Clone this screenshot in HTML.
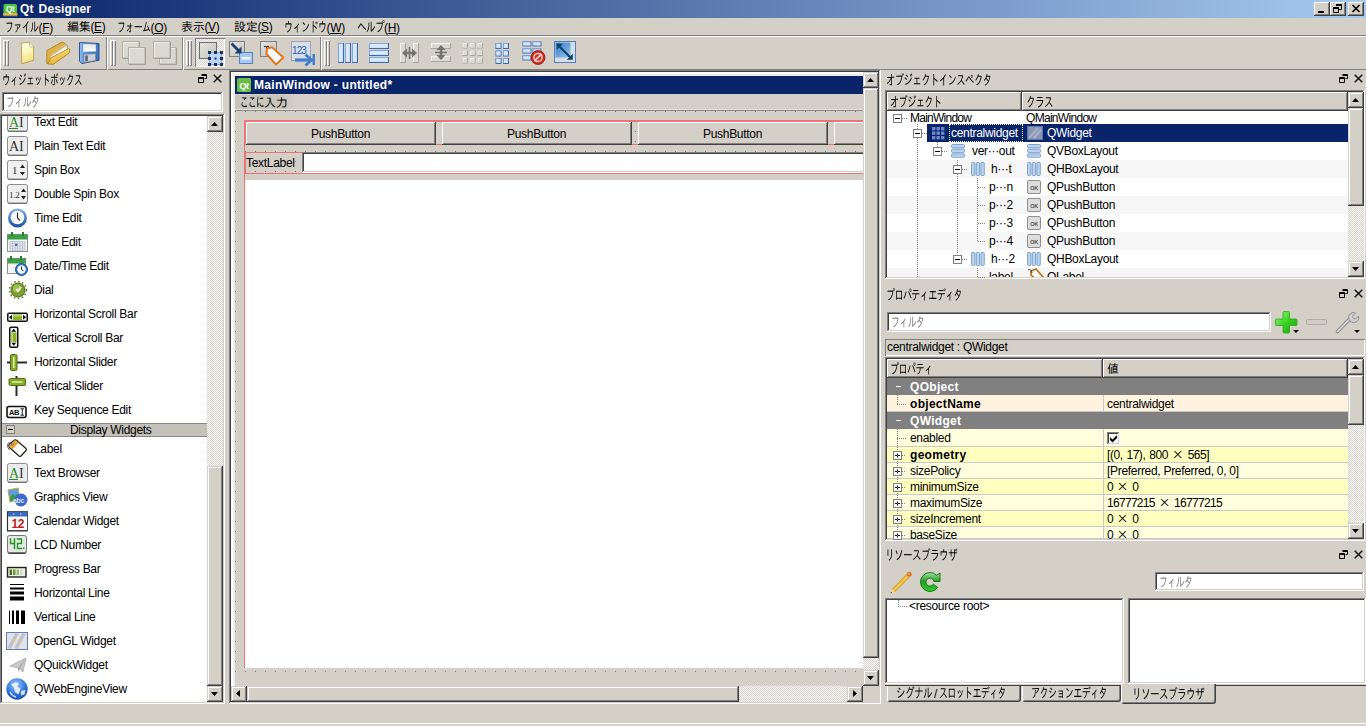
<!DOCTYPE html>
<html lang="ja">
<head>
<meta charset="utf-8">
<title>Qt Designer</title>
<style>
html,body{margin:0;padding:0;}
body{width:1366px;height:726px;overflow:hidden;position:relative;background:#d4d0c8;
 font-family:"Liberation Sans","IPAGothic","Noto Sans CJK JP",sans-serif;font-size:12px;color:#000;letter-spacing:-0.3px;}
div{position:absolute;box-sizing:border-box;}
svg{position:absolute;overflow:visible;}
.t{white-space:nowrap;}
.b{font-weight:bold;letter-spacing:0.3px;}
.k{display:inline-block;font-size:14px;letter-spacing:-1px;white-space:nowrap;line-height:14px;}
.k>i{display:inline-block;font-style:normal;transform-origin:0 50%;margin-left:-0.4px;}
.raised{box-shadow:inset -1px -1px #404040,inset 1px 1px #d4d0c8,inset -2px -2px #808080,inset 2px 2px #fff;background:#d4d0c8;}
.btn{box-shadow:inset -1px -1px #404040,inset 1px 1px #fff,inset -2px -2px #808080,inset 2px 2px #d4d0c8;background:#d4d0c8;}
.sunken{box-shadow:inset -1px -1px #fff,inset 1px 1px #808080,inset -2px -2px #d4d0c8,inset 2px 2px #404040;}
.white{background:#fff;}
.dither{background-color:#fff;background-image:conic-gradient(#d4d0c8 25%,#fff 0 50%,#d4d0c8 0 75%,#fff 0);background-size:2px 2px;}
.gray{color:#808080;}
.x{font-family:"IPAGothic","Noto Sans CJK JP",sans-serif;letter-spacing:0;line-height:0;}
.num{letter-spacing:-0.7px;word-spacing:1px;}
.num2{letter-spacing:-0.45px;word-spacing:1px;}
.hl{background:#fff;}
.sh{background:#808080;}
.dk{background:#404040;}
</style>
</head>
<body>
<div class="" style="left:0px;top:0px;width:1366px;height:18px;background:linear-gradient(90deg,#0a246a 0%,#a6caf0 100%);"></div>
<svg style="left:3px;top:3px" width="15" height="14" viewBox="0 0 15 14"><rect x="0.5" y="1" width="13.500" height="9.500" rx="1.800" fill="#4fc247"/><rect x="0" y="10" width="14.500" height="2.400" fill="#f2b21c"/><rect x="0.5" y="12.400" width="13.500" height="0.800" fill="#aab4c8"/><text x="7.200" y="8.800" font-family="Liberation Sans,sans-serif" font-size="8.500" font-weight="bold" fill="#e8ffe8" text-anchor="middle" letter-spacing="-0.300">Qt</text></svg>
<div class="t b" style="left:20px;top:2px;height:14px;line-height:14px;color:#fff;letter-spacing:0.15px;word-spacing:1.5px;">Qt Designer</div>
<div class="btn" style="left:1314px;top:2px;width:16px;height:14px;"></div>
<div class="btn" style="left:1330px;top:2px;width:16px;height:14px;"></div>
<div class="btn" style="left:1348px;top:2px;width:16px;height:14px;"></div>
<svg style="left:1318px;top:11px" width="6" height="2" viewBox="0 0 6 2"><rect width="6" height="2" fill="#000"/></svg>
<svg style="left:1333px;top:4px" width="9" height="10" viewBox="0 0 9 10"><path d="M3.500 1.500h5v4h-2.500M0.500 4.500h5v4h-5z" fill="none" stroke="#000"/><path d="M3 0h6v2h-6zM0 3h6v2h-6z" fill="#000"/></svg>
<svg style="left:1352px;top:5px" width="8" height="7" viewBox="0 0 8 7"><path d="M0.5 0l7 7M7.5 0l-7 7" stroke="#000" stroke-width="1.6"/></svg>
<div class="t " style="left:5px;top:20px;height:14px;line-height:14px;"><span class="k" style="width:33.5px"><i style="transform:scaleX(0.644)">ファイル</i></span>(<u>F</u>)</div>
<div class="t " style="left:67px;top:20px;height:14px;line-height:14px;">編集(<u>E</u>)</div>
<div class="t " style="left:117px;top:20px;height:14px;line-height:14px;"><span class="k" style="width:33.5px"><i style="transform:scaleX(0.644)">フォーム</i></span>(<u>O</u>)</div>
<div class="t " style="left:181px;top:20px;height:14px;line-height:14px;">表示(<u>V</u>)</div>
<div class="t " style="left:234px;top:20px;height:14px;line-height:14px;">設定(<u>S</u>)</div>
<div class="t " style="left:284px;top:20px;height:14px;line-height:14px;"><span class="k" style="width:42.5px"><i style="transform:scaleX(0.654)">ウィンドウ</i></span>(<u>W</u>)</div>
<div class="t " style="left:357px;top:20px;height:14px;line-height:14px;"><span class="k" style="width:27px"><i style="transform:scaleX(0.692)">ヘルプ</i></span>(<u>H</u>)</div>
<div class="sh" style="left:0px;top:35px;width:1366px;height:1px;"></div>
<div class="hl" style="left:0px;top:36px;width:1366px;height:1px;"></div>
<div class="" style="left:0px;top:36px;width:107px;height:34px;box-shadow:inset 1px 1px #fff,inset -1px -1px #808080;"></div>
<div class="" style="left:107px;top:36px;width:76px;height:34px;box-shadow:inset 1px 1px #fff,inset -1px -1px #808080;"></div>
<div class="" style="left:183px;top:36px;width:138px;height:34px;box-shadow:inset 1px 1px #fff,inset -1px -1px #808080;"></div>
<div class="" style="left:321px;top:36px;width:1045px;height:34px;box-shadow:inset 1px 1px #fff,inset 0 -1px #808080;"></div>
<div class="" style="left:3px;top:40px;width:3px;height:26px;box-shadow:inset 1px 1px #fff,inset -1px -1px #808080;"></div>
<div class="" style="left:6px;top:40px;width:3px;height:26px;box-shadow:inset 1px 1px #fff,inset -1px -1px #808080;"></div>
<div class="" style="left:110px;top:40px;width:3px;height:26px;box-shadow:inset 1px 1px #fff,inset -1px -1px #808080;"></div>
<div class="" style="left:113px;top:40px;width:3px;height:26px;box-shadow:inset 1px 1px #fff,inset -1px -1px #808080;"></div>
<div class="" style="left:186px;top:40px;width:3px;height:26px;box-shadow:inset 1px 1px #fff,inset -1px -1px #808080;"></div>
<div class="" style="left:189px;top:40px;width:3px;height:26px;box-shadow:inset 1px 1px #fff,inset -1px -1px #808080;"></div>
<div class="" style="left:324px;top:40px;width:3px;height:26px;box-shadow:inset 1px 1px #fff,inset -1px -1px #808080;"></div>
<div class="" style="left:327px;top:40px;width:3px;height:26px;box-shadow:inset 1px 1px #fff,inset -1px -1px #808080;"></div>
<svg style="left:15px;top:41px" width="24" height="24" viewBox="0 0 24 24"><defs><linearGradient id="gn" x1="0" y1="0" x2="0.3" y2="1"><stop offset="0" stop-color="#fffff4"/><stop offset="0.5" stop-color="#fdf7c0"/><stop offset="1" stop-color="#f1e27c"/></linearGradient></defs><path d="M6.500 2l8-0.700 4.200 4.400v13.600l-12 3.400z" fill="url(#gn)" stroke="#c2a24c" stroke-width="1"/><path d="M14.500 1.500q-0.500 3.500 0.500 4.500 1.500 0.800 3.700-0.200" fill="#f4f0d8" stroke="#b8b090" stroke-width="0.7"/></svg>
<svg style="left:46px;top:41px" width="25" height="24" viewBox="0 0 25 24"><defs><linearGradient id="go" x1="0" y1="0" x2="0.4" y2="1"><stop offset="0" stop-color="#fae58c"/><stop offset="1" stop-color="#e2b437"/></linearGradient></defs><path d="M0.800 9.500L15 1.500q2-1 3.500 0.500l3 3v4.500L5 18.500v3.500l-4.200 0.500z" fill="#deb244" stroke="#a87a18" stroke-width="0.8"/><path d="M4.500 15.500L20.500 4.500l1.500 5L6 20.500z" fill="#fff" stroke="#b9b4a6" stroke-width="0.6"/><path d="M5 13.500L19.500 3.500" stroke="#cfcabc" stroke-width="0.8"/><path d="M5.500 16.500L22.500 7.500q1.800 0.200 1.300 2.500l-0.600 2L7 23.500l-5.500-0.700z" fill="url(#go)" stroke="#a87a18" stroke-width="0.8"/></svg>
<svg style="left:77px;top:41px" width="24" height="24" viewBox="0 0 24 24"><defs><linearGradient id="gs" x1="0" y1="0" x2="1" y2="0"><stop offset="0" stop-color="#9cc4f2"/><stop offset="0.25" stop-color="#4f8fdc"/><stop offset="1" stop-color="#3a72bc"/></linearGradient><linearGradient id="gs2" x1="0" y1="0" x2="0" y2="1"><stop offset="0" stop-color="#dfe3e8"/><stop offset="1" stop-color="#ffffff"/></linearGradient></defs><path d="M2.500 1.500l19.500 1v16.800L5 22.500l-2.500-2.300z" fill="url(#gs)" stroke="#2c5590" stroke-width="1"/><path d="M6 2.700l13 0.500v7.300L6 11z" fill="url(#gs2)" stroke="#8fa6c4" stroke-width="0.5"/><path d="M7 13.200l11.500-0.500v6.800L7 21.500z" fill="#ccd0d6" stroke="#7d8792" stroke-width="0.6"/><path d="M8.300 14.500l2.500-0.100v5.600l-2.500 0.400z" fill="#59626d"/></svg>
<svg style="left:122px;top:41px" width="24" height="24" viewBox="0 0 24 24"><g transform="translate(0,0)"><rect x="0.5" y="0.5" width="16.500" height="16.500" fill="#dcd9d2" stroke="#b2aea4"/><path d="M1.500 16v-14.500h14.500" stroke="#eceae5" fill="none"/><path d="M1 17.500h16.500v-16.500" stroke="#a29e94" fill="none"/></g><g transform="translate(6,6)"><rect x="0.5" y="0.5" width="16.500" height="16.500" fill="#dcd9d2" stroke="#b2aea4"/><path d="M1.500 16v-14.500h14.500" stroke="#eceae5" fill="none"/><path d="M1 17.500h16.500v-16.500" stroke="#a29e94" fill="none"/></g></svg>
<svg style="left:153px;top:41px" width="24" height="24" viewBox="0 0 24 24"><g transform="translate(6,6)"><rect x="0.5" y="0.5" width="16.500" height="16.500" fill="#dcd9d2" stroke="#b2aea4"/><path d="M1.500 16v-14.500h14.500" stroke="#eceae5" fill="none"/><path d="M1 17.500h16.500v-16.500" stroke="#a29e94" fill="none"/></g><g transform="translate(0,0)"><rect x="0.5" y="0.5" width="16.500" height="16.500" fill="#dcd9d2" stroke="#b2aea4"/><path d="M1.500 16v-14.500h14.500" stroke="#eceae5" fill="none"/><path d="M1 17.500h16.500v-16.500" stroke="#a29e94" fill="none"/></g></svg>
<div class="dither" style="left:195px;top:38px;width:30px;height:29px;box-shadow:inset 1px 1px #808080,inset -1px -1px #fff;"></div>
<svg style="left:199px;top:42px" width="24" height="24" viewBox="0 0 24 24"><defs><linearGradient id="gq" x1="0" y1="0" x2="1" y2="1"><stop offset="0" stop-color="#e6e4de"/><stop offset="1" stop-color="#c4c2bc"/></linearGradient></defs><rect x="0.5" y="0.5" width="17" height="16" fill="url(#gq)" stroke="#6e6e6e" stroke-width="1"/><rect x="10.5" y="10.5" width="12" height="12" fill="#bcd6fa" stroke="#7fa4dc"/><g fill="#1f2f5f"><rect x="9" y="9" width="3" height="3"/><rect x="15" y="9" width="3" height="3"/><rect x="21" y="9" width="3" height="3"/><rect x="9" y="15" width="3" height="3"/><rect x="21" y="15" width="3" height="3"/><rect x="9" y="21" width="3" height="3"/><rect x="15" y="21" width="3" height="3"/><rect x="21" y="21" width="3" height="3"/><rect x="15.500" y="15.500" width="2" height="2"/></g></svg>
<svg style="left:229px;top:41px" width="24" height="24" viewBox="0 0 24 24"><defs><linearGradient id="gq" x1="0" y1="0" x2="1" y2="1"><stop offset="0" stop-color="#e6e4de"/><stop offset="1" stop-color="#c4c2bc"/></linearGradient></defs><rect x="0.5" y="0.5" width="15" height="15" fill="url(#gq)" stroke="#808080"/><rect x="10.5" y="11.5" width="13" height="11" fill="#a9c8f2" stroke="#5583c4"/><rect x="12.500" y="16" width="9" height="2.500" fill="#eef4fc"/><path d="M2.500 2.500l8 8" stroke="#1d3c72" stroke-width="2.600" fill="none"/><path d="M12.500 5.500v7h-7z" fill="#1d3c72"/></svg>
<svg style="left:260px;top:41px" width="24" height="24" viewBox="0 0 24 24"><defs><linearGradient id="gq" x1="0" y1="0" x2="1" y2="1"><stop offset="0" stop-color="#e6e4de"/><stop offset="1" stop-color="#c4c2bc"/></linearGradient></defs><rect x="0.5" y="0.5" width="16" height="15" fill="url(#gq)" stroke="#808080"/><path d="M4 5.500h5M6.500 5.500v4" stroke="#333" stroke-width="1.2" fill="none"/><path d="M7 7.500l5-1.200 11.300 10.200-7.300 7-9.500-10.500z" fill="#fff" stroke="#e2781c" stroke-width="2" stroke-linejoin="round"/></svg>
<svg style="left:291px;top:41px" width="26" height="24" viewBox="0 0 26 24"><rect x="0.5" y="0.5" width="19" height="19" fill="#d9dee6" stroke="#97a4b8"/><text x="1" y="12.500" font-family="Liberation Sans,sans-serif" font-size="10" fill="#1f5fb4" letter-spacing="-0.9">123</text><path d="M4 19h14" stroke="#3f7fd0" stroke-width="3.200" fill="none"/><path d="M14.500 13.500l6 5.500-6 5.500" stroke="#3f7fd0" stroke-width="2.800" fill="none"/><rect x="21.500" y="13" width="2.500" height="11" fill="#3f7fd0"/></svg>
<svg style="left:337px;top:41px" width="24" height="24" viewBox="0 0 24 24"><rect x="1" y="2" width="6" height="20" fill="#4668a8"/><rect x="1" y="2" width="5" height="19" fill="#7fa6de"/><rect x="2" y="3" width="4" height="18" fill="#c6dffa"/><rect x="2" y="3" width="3" height="17" fill="#deeeff" opacity="0.7"/><rect x="8" y="2" width="6" height="20" fill="#4668a8"/><rect x="8" y="2" width="5" height="19" fill="#7fa6de"/><rect x="9" y="3" width="4" height="18" fill="#c6dffa"/><rect x="9" y="3" width="3" height="17" fill="#deeeff" opacity="0.7"/><rect x="15" y="2" width="6" height="20" fill="#4668a8"/><rect x="15" y="2" width="5" height="19" fill="#7fa6de"/><rect x="16" y="3" width="4" height="18" fill="#c6dffa"/><rect x="16" y="3" width="3" height="17" fill="#deeeff" opacity="0.7"/></svg>
<svg style="left:367px;top:41px" width="24" height="24" viewBox="0 0 24 24"><rect x="2" y="2" width="20" height="6" fill="#4668a8"/><rect x="2" y="2" width="19" height="5" fill="#7fa6de"/><rect x="3" y="3" width="18" height="4" fill="#c6dffa"/><rect x="3" y="3" width="17" height="3" fill="#deeeff" opacity="0.7"/><rect x="2" y="9" width="20" height="6" fill="#4668a8"/><rect x="2" y="9" width="19" height="5" fill="#7fa6de"/><rect x="3" y="10" width="18" height="4" fill="#c6dffa"/><rect x="3" y="10" width="17" height="3" fill="#deeeff" opacity="0.7"/><rect x="2" y="16" width="20" height="6" fill="#4668a8"/><rect x="2" y="16" width="19" height="5" fill="#7fa6de"/><rect x="3" y="17" width="18" height="4" fill="#c6dffa"/><rect x="3" y="17" width="17" height="3" fill="#deeeff" opacity="0.7"/></svg>
<svg style="left:398px;top:41px" width="24" height="24" viewBox="0 0 24 24"><rect x="2" y="2" width="6" height="20" fill="#a9a59c"/><rect x="2" y="2" width="5" height="19" fill="#f4f3f0"/><rect x="3" y="3" width="4" height="18" fill="#dbd8d1"/><rect x="15" y="2" width="6" height="20" fill="#a9a59c"/><rect x="15" y="2" width="5" height="19" fill="#f4f3f0"/><rect x="16" y="3" width="4" height="18" fill="#dbd8d1"/><path d="M6 12h11" stroke="#76736b" stroke-width="2.400"/><path d="M9 7.500l-5 4.500 5 4.500zM14 7.500l5 4.500-5 4.500z" fill="#76736b"/><path d="M11.500 6v12" stroke="#76736b" stroke-width="1.600"/></svg>
<svg style="left:429px;top:41px" width="24" height="24" viewBox="0 0 24 24"><rect x="2" y="2" width="20" height="6" fill="#a9a59c"/><rect x="2" y="2" width="19" height="5" fill="#f4f3f0"/><rect x="3" y="3" width="18" height="4" fill="#dbd8d1"/><rect x="2" y="15" width="20" height="6" fill="#a9a59c"/><rect x="2" y="15" width="19" height="5" fill="#f4f3f0"/><rect x="3" y="16" width="18" height="4" fill="#dbd8d1"/><path d="M12 6v11" stroke="#76736b" stroke-width="2.400"/><path d="M7.500 9l4.500-5 4.500 5zM7.500 14l4.500 5 4.500-5z" fill="#76736b"/><path d="M6 11.500h12" stroke="#76736b" stroke-width="1.600"/></svg>
<svg style="left:461px;top:41px" width="24" height="24" viewBox="0 0 24 24"><rect x="1.5" y="2.0" width="5.5" height="5.5" fill="#a9a59c"/><rect x="1.5" y="2.0" width="4.5" height="4.5" fill="#f4f3f0"/><rect x="2.5" y="3.0" width="3.5" height="3.5" fill="#dbd8d1"/><rect x="9.0" y="2.0" width="5.5" height="5.5" fill="#a9a59c"/><rect x="9.0" y="2.0" width="4.5" height="4.5" fill="#f4f3f0"/><rect x="10.0" y="3.0" width="3.5" height="3.5" fill="#dbd8d1"/><rect x="16.5" y="2.0" width="5.5" height="5.5" fill="#a9a59c"/><rect x="16.5" y="2.0" width="4.5" height="4.5" fill="#f4f3f0"/><rect x="17.5" y="3.0" width="3.5" height="3.5" fill="#dbd8d1"/><rect x="1.5" y="9.5" width="5.5" height="5.5" fill="#a9a59c"/><rect x="1.5" y="9.5" width="4.5" height="4.5" fill="#f4f3f0"/><rect x="2.5" y="10.5" width="3.5" height="3.5" fill="#dbd8d1"/><rect x="9.0" y="9.5" width="5.5" height="5.5" fill="#a9a59c"/><rect x="9.0" y="9.5" width="4.5" height="4.5" fill="#f4f3f0"/><rect x="10.0" y="10.5" width="3.5" height="3.5" fill="#dbd8d1"/><rect x="16.5" y="9.5" width="5.5" height="5.5" fill="#a9a59c"/><rect x="16.5" y="9.5" width="4.5" height="4.5" fill="#f4f3f0"/><rect x="17.5" y="10.5" width="3.5" height="3.5" fill="#dbd8d1"/><rect x="1.5" y="17.0" width="5.5" height="5.5" fill="#a9a59c"/><rect x="1.5" y="17.0" width="4.5" height="4.5" fill="#f4f3f0"/><rect x="2.5" y="18.0" width="3.5" height="3.5" fill="#dbd8d1"/><rect x="9.0" y="17.0" width="5.5" height="5.5" fill="#a9a59c"/><rect x="9.0" y="17.0" width="4.5" height="4.5" fill="#f4f3f0"/><rect x="10.0" y="18.0" width="3.5" height="3.5" fill="#dbd8d1"/><rect x="16.5" y="17.0" width="5.5" height="5.5" fill="#a9a59c"/><rect x="16.5" y="17.0" width="4.5" height="4.5" fill="#f4f3f0"/><rect x="17.5" y="18.0" width="3.5" height="3.5" fill="#dbd8d1"/></svg>
<svg style="left:491px;top:41px" width="24" height="24" viewBox="0 0 24 24"><rect x="4.5" y="2.0" width="6" height="6" fill="#4668a8"/><rect x="4.5" y="2.0" width="5" height="5" fill="#7fa6de"/><rect x="5.5" y="3.0" width="4" height="4" fill="#c6dffa"/><rect x="5.5" y="3.0" width="3" height="3" fill="#deeeff" opacity="0.7"/><rect x="12.0" y="2.0" width="6" height="6" fill="#4668a8"/><rect x="12.0" y="2.0" width="5" height="5" fill="#7fa6de"/><rect x="13.0" y="3.0" width="4" height="4" fill="#c6dffa"/><rect x="13.0" y="3.0" width="3" height="3" fill="#deeeff" opacity="0.7"/><rect x="4.5" y="9.5" width="6" height="6" fill="#4668a8"/><rect x="4.5" y="9.5" width="5" height="5" fill="#7fa6de"/><rect x="5.5" y="10.5" width="4" height="4" fill="#c6dffa"/><rect x="5.5" y="10.5" width="3" height="3" fill="#deeeff" opacity="0.7"/><rect x="12.0" y="9.5" width="6" height="6" fill="#4668a8"/><rect x="12.0" y="9.5" width="5" height="5" fill="#7fa6de"/><rect x="13.0" y="10.5" width="4" height="4" fill="#c6dffa"/><rect x="13.0" y="10.5" width="3" height="3" fill="#deeeff" opacity="0.7"/><rect x="4.5" y="17.0" width="6" height="6" fill="#4668a8"/><rect x="4.5" y="17.0" width="5" height="5" fill="#7fa6de"/><rect x="5.5" y="18.0" width="4" height="4" fill="#c6dffa"/><rect x="5.5" y="18.0" width="3" height="3" fill="#deeeff" opacity="0.7"/><rect x="12.0" y="17.0" width="6" height="6" fill="#4668a8"/><rect x="12.0" y="17.0" width="5" height="5" fill="#7fa6de"/><rect x="13.0" y="18.0" width="4" height="4" fill="#c6dffa"/><rect x="13.0" y="18.0" width="3" height="3" fill="#deeeff" opacity="0.7"/></svg>
<svg style="left:522px;top:41px" width="24" height="24" viewBox="0 0 24 24"><rect x="0.5" y="0.5" width="9" height="5" fill="#4668a8"/><rect x="0.5" y="0.5" width="8" height="4" fill="#7fa6de"/><rect x="1.5" y="1.5" width="7" height="3" fill="#c6dffa"/><rect x="1.5" y="1.5" width="6" height="2" fill="#deeeff" opacity="0.7"/><rect x="10.5" y="0.5" width="9" height="5" fill="#4668a8"/><rect x="10.5" y="0.5" width="8" height="4" fill="#7fa6de"/><rect x="11.5" y="1.5" width="7" height="3" fill="#c6dffa"/><rect x="11.5" y="1.5" width="6" height="2" fill="#deeeff" opacity="0.7"/><rect x="0.5" y="7.5" width="9" height="5" fill="#4668a8"/><rect x="0.5" y="7.5" width="8" height="4" fill="#7fa6de"/><rect x="1.5" y="8.5" width="7" height="3" fill="#c6dffa"/><rect x="1.5" y="8.5" width="6" height="2" fill="#deeeff" opacity="0.7"/><rect x="10.5" y="7.5" width="9" height="5" fill="#4668a8"/><rect x="10.5" y="7.5" width="8" height="4" fill="#7fa6de"/><rect x="11.5" y="8.5" width="7" height="3" fill="#c6dffa"/><rect x="11.5" y="8.5" width="6" height="2" fill="#deeeff" opacity="0.7"/><rect x="0.5" y="14.5" width="9" height="5" fill="#4668a8"/><rect x="0.5" y="14.5" width="8" height="4" fill="#7fa6de"/><rect x="1.5" y="15.5" width="7" height="3" fill="#c6dffa"/><rect x="1.5" y="15.5" width="6" height="2" fill="#deeeff" opacity="0.7"/><rect x="10.5" y="14.5" width="9" height="5" fill="#4668a8"/><rect x="10.5" y="14.5" width="8" height="4" fill="#7fa6de"/><rect x="11.5" y="15.5" width="7" height="3" fill="#c6dffa"/><rect x="11.5" y="15.5" width="6" height="2" fill="#deeeff" opacity="0.7"/><circle cx="16" cy="16.500" r="7" fill="#cf2a1c" stroke="#8e1a10" stroke-width="0.8"/><circle cx="16" cy="16.500" r="4" fill="none" stroke="#f3c6c0" stroke-width="1.600"/><path d="M12.500 20l7-7" stroke="#f3c6c0" stroke-width="1.800"/></svg>
<svg style="left:553px;top:41px" width="24" height="24" viewBox="0 0 24 24"><defs><linearGradient id="ga" x1="0" y1="0" x2="1" y2="1"><stop offset="0" stop-color="#2f78c4"/><stop offset="1" stop-color="#9cc6ee"/></linearGradient></defs><rect x="1.500" y="0.500" width="21" height="21" fill="#d6dde4" stroke="#4f80c0"/><rect x="2.500" y="1.500" width="15" height="15" fill="url(#ga)"/><path d="M5.500 4.500l12.500 12.500" stroke="#0d4468" stroke-width="2.200"/><path d="M3.800 2.800h6l-6 6zM19.800 18.800h-6l6-6z" fill="#0d4468"/></svg>
<div class="t " style="left:2px;top:73px;height:14px;line-height:14px;"><span class="k" style="width:80px"><i style="transform:scaleX(0.615)">ウィジェットボックス</i></span></div>
<svg style="left:198px;top:74px" width="9" height="9" viewBox="0 0 9 9"><path d="M3.5 0.5h5v4h-2M3.5 1.5h5M0.5 3.5h5v5h-5zM0.5 4.5h5" fill="none" stroke="#000" stroke-width="1"/></svg>
<svg style="left:213px;top:74px" width="9" height="9" viewBox="0 0 9 9"><path d="M0.7 0.7l7.6 7.6M8.3 0.7l-7.6 7.6" stroke="#000" stroke-width="1.3" fill="none"/></svg>
<div class="sunken white" style="left:2px;top:92px;width:221px;height:20px;"></div>
<div class="t gray" style="left:6px;top:95px;height:14px;line-height:14px;"><span class="k" style="width:33.5px"><i style="transform:scaleX(0.644)">フィルタ</i></span></div>
<div class="sunken white" style="left:0px;top:114px;width:225px;height:590px;"></div>
<div class="dither" style="left:207px;top:116px;width:16px;height:586px;"></div>
<div class="raised" style="left:207px;top:116px;width:16px;height:16px;"></div>
<svg style="left:211px;top:122px" width="7" height="4" viewBox="0 0 7 4"><polygon points="0,4 3.5,0 7,4" fill="#000"/></svg>
<div class="raised" style="left:207px;top:686px;width:16px;height:16px;"></div>
<svg style="left:211px;top:692px" width="7" height="4" viewBox="0 0 7 4"><polygon points="0,0 7,0 3.5,4" fill="#000"/></svg>
<div class="raised" style="left:207px;top:466px;width:16px;height:220px;"></div>
<div style="left:2px;top:116px;width:205px;height:586px;overflow:hidden">
<div class="t " style="left:32px;top:-1px;height:14px;line-height:14px;">Text Edit</div>
<svg style="left:5px;top:-4px" width="22" height="20" viewBox="0 0 22 20"><rect x="0.5" y="1" width="20" height="19" rx="2" fill="#555"/><rect x="0.5" y="0.5" width="20" height="18.500" rx="2" fill="#ececec" stroke="#8c8c8c"/><text x="2" y="15" font-family="Liberation Serif,serif" font-size="14" fill="#2a8a2a">A</text><text x="12" y="15" font-family="Liberation Serif,serif" font-size="14" fill="#333">I</text><path d="M2 16.5h9" stroke="#2a8a2a"/></svg>
<div class="t " style="left:32px;top:23px;height:14px;line-height:14px;">Plain Text Edit</div>
<svg style="left:5px;top:20px" width="22" height="20" viewBox="0 0 22 20"><rect x="0.5" y="1" width="20" height="19" rx="2" fill="#555"/><rect x="0.5" y="0.5" width="20" height="18.500" rx="2" fill="#ececec" stroke="#8c8c8c"/><text x="2" y="15" font-family="Liberation Serif,serif" font-size="14" fill="#333">A</text><text x="12" y="15" font-family="Liberation Serif,serif" font-size="14" fill="#333">I</text></svg>
<div class="t " style="left:32px;top:47px;height:14px;line-height:14px;">Spin Box</div>
<svg style="left:5px;top:44px" width="22" height="20" viewBox="0 0 22 20"><rect x="0.5" y="1" width="20" height="19" rx="2" fill="#555"/><rect x="0.5" y="0.5" width="20" height="18.500" rx="2" fill="#f0f0f0" stroke="#8c8c8c"/><text x="5" y="14" font-family="Liberation Serif,serif" font-size="11" fill="#333">1</text><path d="M13 8l2.5-3.5 2.5 3.5zM13 12l2.5 3.5 2.5-3.5z" fill="#222"/></svg>
<div class="t " style="left:32px;top:71px;height:14px;line-height:14px;">Double Spin Box</div>
<svg style="left:5px;top:68px" width="22" height="20" viewBox="0 0 22 20"><rect x="0.5" y="1" width="20" height="19" rx="2" fill="#555"/><rect x="0.5" y="0.5" width="20" height="18.500" rx="2" fill="#f0f0f0" stroke="#8c8c8c"/><text x="2" y="14" font-family="Liberation Serif,serif" font-size="9" fill="#333">1.2</text><path d="M14 8l2.5-3.5 2.5 3.5zM14 12l2.5 3.5 2.5-3.5z" fill="#222"/></svg>
<div class="t " style="left:32px;top:95px;height:14px;line-height:14px;">Time Edit</div>
<svg style="left:5px;top:92px" width="22" height="20" viewBox="0 0 22 20"><defs><linearGradient id="gc" x1="0" y1="0" x2="0" y2="1"><stop offset="0" stop-color="#7fb2ee"/><stop offset="1" stop-color="#1d4f9e"/></linearGradient></defs><circle cx="10.500" cy="10" r="9.500" fill="url(#gc)"/><circle cx="10.500" cy="9.500" r="6.800" fill="#fbfdff"/><path d="M10.500 4.500v5.500l2.500 2.500" stroke="#333" stroke-width="1.200" fill="none"/></svg>
<div class="t " style="left:32px;top:119px;height:14px;line-height:14px;">Date Edit</div>
<svg style="left:5px;top:116px" width="22" height="20" viewBox="0 0 22 20"><rect x="0.5" y="2.5" width="20" height="17" fill="#f4f4f4" stroke="#909090"/><rect x="0.5" y="2.5" width="20" height="5" fill="#3aa040"/><path d="M5 0v4M16 0v4" stroke="#2a7a30" stroke-width="2"/><g stroke="#aab4cc" stroke-width="0.7"><path d="M3 9.5h15"/><path d="M3 11.7h15"/><path d="M3 13.9h15"/><path d="M3 16.1h15"/><path d="M3 18.3h15"/><path d="M3.0 9.500v8.800"/><path d="M5.5 9.500v8.800"/><path d="M8.0 9.500v8.800"/><path d="M10.5 9.500v8.800"/><path d="M13.0 9.500v8.800"/><path d="M15.5 9.500v8.800"/><path d="M18.0 9.500v8.800"/></g><rect x="8" y="11.700" width="2.500" height="2.200" fill="#4a6ad0"/></svg>
<div class="t " style="left:32px;top:143px;height:14px;line-height:14px;">Date/Time Edit</div>
<svg style="left:5px;top:140px" width="22" height="20" viewBox="0 0 22 20"><rect x="0.5" y="2.5" width="18" height="15" fill="#f4f4f4" stroke="#909090"/><rect x="0.5" y="2.5" width="18" height="5" fill="#3aa040"/><path d="M4 0v4M14 0v4" stroke="#2a7a30" stroke-width="2"/><circle cx="14.5" cy="13.5" r="6" fill="#3a7ad0" stroke="#1a4a98"/><circle cx="14.5" cy="13.5" r="4.2" fill="#f4f8ff"/><path d="M14.5 10.500v3.200l2 1" stroke="#333" fill="none"/></svg>
<div class="t " style="left:32px;top:167px;height:14px;line-height:14px;">Dial</div>
<svg style="left:5px;top:164px" width="22" height="20" viewBox="0 0 22 20"><circle cx="11" cy="10" r="8.500" fill="none" stroke="#5a7a20" stroke-width="1.5" stroke-dasharray="1.5 2.5"/><circle cx="11" cy="10" r="7" fill="#7aa030" stroke="#4a6a18"/><circle cx="10" cy="8.500" r="4" fill="#a0c050"/><path d="M9 9l2 2 3-4" stroke="#fff" stroke-width="1.6" fill="none"/></svg>
<div class="t " style="left:32px;top:191px;height:14px;line-height:14px;">Horizontal Scroll Bar</div>
<svg style="left:5px;top:188px" width="22" height="20" viewBox="0 0 22 20"><rect x="0" y="8.500" width="21" height="9.500" rx="2" fill="#111"/><rect x="1.500" y="10" width="18" height="6.500" rx="0.5" fill="#f4f4f4"/><rect x="6" y="10.500" width="9" height="5.500" fill="#8cb22c"/><rect x="6" y="10.500" width="9" height="2" fill="#b4d45c"/><path d="M5 10.800v4.900l-3-2.450zM16 10.800v4.900l3-2.450z" fill="#111"/></svg>
<div class="t " style="left:32px;top:215px;height:14px;line-height:14px;">Vertical Scroll Bar</div>
<svg style="left:5px;top:212px" width="22" height="20" viewBox="0 0 22 20"><rect x="2" y="-1.500" width="9.500" height="21.500" rx="2" fill="#111"/><rect x="3.500" y="0" width="6.500" height="18.500" rx="0.5" fill="#f4f4f4"/><rect x="4" y="4.500" width="5.500" height="9.500" fill="#8cb22c"/><rect x="4" y="4.500" width="2" height="9.500" fill="#b4d45c"/><path d="M4.300 3.800h4.900l-2.450-3zM4.300 14.800h4.900l-2.450 3z" fill="#111"/></svg>
<div class="t " style="left:32px;top:239px;height:14px;line-height:14px;">Horizontal Slider</div>
<svg style="left:5px;top:236px" width="22" height="20" viewBox="0 0 22 20"><path d="M0 10.500h20" stroke="#2a2a2a" stroke-width="2"/><rect x="3.500" y="2.500" width="6.500" height="16" rx="1.500" fill="#86ad28" stroke="#4d6c14"/><path d="M6.800 5v11" stroke="#e6f4b8" stroke-width="1.400"/></svg>
<div class="t " style="left:32px;top:263px;height:14px;line-height:14px;">Vertical Slider</div>
<svg style="left:5px;top:260px" width="22" height="20" viewBox="0 0 22 20"><path d="M9.500 0v20" stroke="#2a2a2a" stroke-width="2"/><rect x="2" y="2.500" width="16.500" height="7" rx="1.500" fill="#86ad28" stroke="#4d6c14"/><path d="M5 6h10.500" stroke="#e6f4b8" stroke-width="1.400"/></svg>
<div class="t " style="left:32px;top:287px;height:14px;line-height:14px;">Key Sequence Edit</div>
<svg style="left:5px;top:284px" width="22" height="20" viewBox="0 0 22 20"><rect x="0" y="6.500" width="19" height="11" rx="2" fill="#f8f8f8" stroke="#111" stroke-width="1.600"/><text x="2" y="15.200" font-family="Liberation Sans,sans-serif" font-weight="bold" font-size="7.500" fill="#111" letter-spacing="-0.3">AB</text><path d="M13.500 8.800h3.500M15.250 8.800v6.400M13.500 15.200h3.500" stroke="#111" stroke-width="0.9"/></svg>
<div class="" style="left:0px;top:307px;width:205px;height:14px;background:#c4c1ba;border-top:1px solid #8a8882;border-bottom:1px solid #8a8882;"></div>
<svg style="left:4px;top:309px" width="9" height="9" viewBox="0 0 9 9"><rect x="0.5" y="0.5" width="8" height="8" fill="#d4d0c8" stroke="#808080"/><path d="M2 4.5h5" stroke="#000"/></svg>
<div class="t " style="left:68px;top:307px;height:14px;line-height:14px;">Display Widgets</div>
<div class="t " style="left:32px;top:326px;height:14px;line-height:14px;">Label</div>
<svg style="left:5px;top:323px" width="22" height="20" viewBox="0 0 22 20"><path d="M2 5.500l5.500-4.500q1-0.500 2 0.300l9.500 8.200q0.800 1 0 2l-5 5.500q-1 0.800-2 0l-9.500-8.500q-1-1-0.500-3z" fill="#fff" stroke="#2e2416" stroke-width="1.300" stroke-linejoin="round"/><path d="M2.700 5.800l5-4.200q0.800-0.300 1.500 0.300l2.300 2-6 6.300-2.300-2q-0.800-0.900-0.500-2.400z" fill="#f0a030"/><circle cx="5.200" cy="5" r="1.100" fill="#fff" stroke="#2e2416" stroke-width="0.600"/><path d="M5 5q-4-3-4.500 1 0 3 2 5" stroke="#444" stroke-width="0.800" fill="none"/></svg>
<div class="t " style="left:32px;top:350px;height:14px;line-height:14px;">Text Browser</div>
<svg style="left:5px;top:347px" width="22" height="20" viewBox="0 0 22 20"><rect x="0.5" y="1" width="20" height="19" rx="2" fill="#555"/><rect x="0.5" y="0.5" width="20" height="18.500" rx="2" fill="#ececec" stroke="#8c8c8c"/><text x="2" y="15" font-family="Liberation Serif,serif" font-size="14" fill="#2a8a2a">A</text><text x="12" y="15" font-family="Liberation Serif,serif" font-size="14" fill="#333">I</text><path d="M2 16.5h9" stroke="#2a8a2a"/></svg>
<div class="t " style="left:32px;top:374px;height:14px;line-height:14px;">Graphics View</div>
<svg style="left:5px;top:371px" width="22" height="20" viewBox="0 0 22 20"><path d="M1 3l10-2 2 12-10 2z" fill="#5aa0e0" stroke="#c8a040"/><path d="M3 11l3-4 2 2 2-3 2 6-9 2z" fill="#3a9a40"/><circle cx="14" cy="13" r="6.500" fill="#3a6ad0"/><text x="6" y="16" font-family="Liberation Sans,sans-serif" font-weight="bold" font-size="7" fill="#dde">abc</text></svg>
<div class="t " style="left:32px;top:398px;height:14px;line-height:14px;">Calendar Widget</div>
<svg style="left:5px;top:395px" width="22" height="20" viewBox="0 0 22 20"><rect x="0.500" y="0.500" width="20" height="19" fill="#fbfbfb" stroke="#4a5568"/><path d="M0.500 1v19h20" stroke="#333" stroke-width="1.200" fill="none"/><rect x="1" y="1" width="19" height="4.500" fill="#3a6ac0"/><path d="M6 3h1.500M13 3h1.500" stroke="#dfe8ff" stroke-width="1.200"/><text x="10.800" y="17" font-family="Liberation Sans,sans-serif" font-weight="bold" font-size="12" fill="#c02020" text-anchor="middle" letter-spacing="-0.500">12</text></svg>
<div class="t " style="left:32px;top:422px;height:14px;line-height:14px;">LCD Number</div>
<svg style="left:5px;top:419px" width="22" height="20" viewBox="0 0 22 20"><rect x="0.500" y="1" width="19" height="18" rx="2" fill="#444"/><rect x="0.500" y="0.500" width="19" height="17" rx="2" fill="#e6e6e6" stroke="#777"/><g stroke="#1c9a1c" stroke-width="1.400" fill="none" stroke-linecap="square"><path d="M3.500 4v4.500h4M7.500 4v9.500"/><path d="M10.500 4h4v4.500h-4v5h4"/></g><rect x="16" y="12.500" width="1.500" height="1.500" fill="#1c9a1c"/></svg>
<div class="t " style="left:32px;top:446px;height:14px;line-height:14px;">Progress Bar</div>
<svg style="left:5px;top:443px" width="22" height="20" viewBox="0 0 22 20"><rect x="0.500" y="8.500" width="18.500" height="9.500" fill="#ececec" stroke="#222" stroke-width="1.400"/><rect x="2.500" y="10.500" width="2.500" height="5.500" fill="#4a7a18"/><rect x="6" y="10.500" width="2.500" height="5.500" fill="#6a9a30"/><rect x="9.500" y="10.500" width="2.500" height="5.500" fill="#a0c070"/><rect x="13" y="10.500" width="2.500" height="5.500" fill="#d0e0b8"/></svg>
<div class="t " style="left:32px;top:470px;height:14px;line-height:14px;">Horizontal Line</div>
<svg style="left:5px;top:467px" width="22" height="20" viewBox="0 0 22 20"><path d="M3 1.500h14" stroke="#000" stroke-width="1"/><path d="M3 5.500h14" stroke="#000" stroke-width="2"/><path d="M3 10h14" stroke="#000" stroke-width="3"/><path d="M3 15.500h14" stroke="#000" stroke-width="4"/></svg>
<div class="t " style="left:32px;top:494px;height:14px;line-height:14px;">Vertical Line</div>
<svg style="left:5px;top:491px" width="22" height="20" viewBox="0 0 22 20"><path d="M2.500 3.500v13.500" stroke="#000" stroke-width="1"/><path d="M6 3.500v13.500" stroke="#000" stroke-width="2"/><path d="M10.500 3.500v13.500" stroke="#000" stroke-width="3"/><path d="M16 3.500v13.500" stroke="#000" stroke-width="4"/></svg>
<div class="t " style="left:32px;top:518px;height:14px;line-height:14px;">OpenGL Widget</div>
<svg style="left:5px;top:515px" width="22" height="20" viewBox="0 0 22 20"><rect x="-0.500" y="1.500" width="21" height="17" fill="#e2e2e2" stroke="#5a80c0"/><path d="M2 17.500l8-15M9 17.500l8-15" stroke="#c2c2c2" stroke-width="3.500"/></svg>
<div class="t " style="left:32px;top:542px;height:14px;line-height:14px;">QQuickWidget</div>
<svg style="left:5px;top:539px" width="22" height="20" viewBox="0 0 22 20"><path d="M3 11l16-8-3 14-5-4z" fill="#c8c8c8" stroke="#999" stroke-width="0.6"/><path d="M19 3l-8 10v4z" fill="#a8a8a8"/></svg>
<div class="t " style="left:32px;top:566px;height:14px;line-height:14px;">QWebEngineView</div>
<svg style="left:5px;top:563px" width="22" height="20" viewBox="0 0 22 20"><defs><radialGradient id="gw" cx="0.45" cy="0.3" r="0.75"><stop offset="0" stop-color="#9ccbff"/><stop offset="0.6" stop-color="#2f74dc"/><stop offset="1" stop-color="#1446a8"/></radialGradient></defs><circle cx="10" cy="10" r="10.700" fill="url(#gw)"/><path d="M4 5.500q4-3.500 8-1l-2 3 3.500 2-2 6-3.500-2.500-1-4.500z" fill="#eef4ff" opacity="0.900"/><path d="M14 12l4.500-1-1 4.500-3.500 1z" fill="#eef4ff" opacity="0.850"/><path d="M3 13q2 4 6 5" stroke="#eef4ff" stroke-width="1.500" fill="none" opacity="0.800"/></svg>
</div>
<div class="sunken" style="left:229px;top:70px;width:652px;height:634px;background:#d4d0c8;"></div>
<div class="" style="left:231px;top:72px;width:632px;height:614px;background:#d4d0c8;box-shadow:inset 2px 2px #fff,inset 4px 4px #efede8;"></div>
<div class="" style="left:235px;top:76px;width:628px;height:18px;background:#0a246a;"></div>
<svg style="left:237px;top:78px" width="14" height="14" viewBox="0 0 14 14"><rect width="14" height="14" rx="1.5" fill="#6cbd45"/><text x="7" y="10.5" font-family="Liberation Sans,sans-serif" font-size="9" font-weight="bold" fill="#fff" text-anchor="middle" letter-spacing="-0.5">Qt</text></svg>
<div class="t b" style="left:254px;top:78px;height:14px;line-height:14px;color:#fff;">MainWindow - untitled*</div>
<div class="" style="left:235px;top:95px;width:61px;height:14px;background:linear-gradient(90deg,#c9c5bd 80%,#d4d0c8);"></div>
<div class="t " style="left:240px;top:95px;height:14px;line-height:14px;"><span class="k" style="width:24px"><i style="transform:scaleX(0.615)">ここに</i></span>入力</div>
<div class="" style="left:235px;top:110px;width:628px;height:1px;background:#8c8a84"></div>
<div class="" style="left:235px;top:109px;width:628px;height:1px;background:#e4e1da"></div>
<div class="" style="left:235px;top:111px;width:628px;height:565px;background-image:conic-gradient(#7c7a76 0 0);background-size:10px 10px;-webkit-mask-image:linear-gradient(90deg,#000 1px,transparent 1px),linear-gradient(#000 1px,transparent 1px);-webkit-mask-size:10px 10px;-webkit-mask-composite:source-in;mask-composite:intersect;"></div>
<div class="" style="left:244px;top:120px;width:619px;height:548px;border:1px solid #ec7474;border-right:none;"></div>
<div class="white" style="left:245px;top:180px;width:618px;height:488px;"></div>
<div class="" style="left:245px;top:121px;width:618px;height:24px;border:1px solid #ec7474;border-right:none;"></div>
<div class="" style="left:245px;top:152px;width:618px;height:22px;border:1px solid #ec7474;border-right:none;"></div>
<div class="btn" style="left:246px;top:122px;width:190px;height:23px;clip-path:inset(0 0px 0 0);"></div>
<div class="t " style="left:311px;top:127px;height:14px;line-height:14px;">PushButton</div>
<div class="btn" style="left:442px;top:122px;width:190px;height:23px;clip-path:inset(0 0px 0 0);"></div>
<div class="t " style="left:507px;top:127px;height:14px;line-height:14px;">PushButton</div>
<div class="btn" style="left:638px;top:122px;width:190px;height:23px;clip-path:inset(0 0px 0 0);"></div>
<div class="t " style="left:703px;top:127px;height:14px;line-height:14px;">PushButton</div>
<div class="btn" style="left:834px;top:122px;width:190px;height:23px;clip-path:inset(0 161px 0 0);"></div>
<div class="t " style="left:246px;top:156px;height:14px;line-height:14px;">TextLabel</div>
<div class="sunken white" style="left:302px;top:152px;width:563px;height:21px;clip-path:inset(0 2px 0 0)"></div>
<div class="dither" style="left:863px;top:72px;width:16px;height:614px;"></div>
<div class="raised" style="left:863px;top:72px;width:16px;height:16px;"></div>
<svg style="left:867px;top:78px" width="7" height="4" viewBox="0 0 7 4"><polygon points="0,4 3.5,0 7,4" fill="#000"/></svg>
<div class="raised" style="left:863px;top:670px;width:16px;height:16px;"></div>
<svg style="left:867px;top:676px" width="7" height="4" viewBox="0 0 7 4"><polygon points="0,0 7,0 3.5,4" fill="#000"/></svg>
<div class="raised" style="left:863px;top:88px;width:16px;height:570px;"></div>
<div class="dither" style="left:231px;top:686px;width:632px;height:16px;"></div>
<div class="raised" style="left:231px;top:686px;width:16px;height:16px;"></div>
<svg style="left:236px;top:690px" width="4" height="7" viewBox="0 0 4 7"><polygon points="4,0 4,7 0,3.5" fill="#000"/></svg>
<div class="raised" style="left:847px;top:686px;width:16px;height:16px;"></div>
<svg style="left:853px;top:690px" width="4" height="7" viewBox="0 0 4 7"><polygon points="0,0 4,3.5 0,7" fill="#000"/></svg>
<div class="raised" style="left:247px;top:686px;width:492px;height:16px;"></div>
<div class="" style="left:863px;top:686px;width:16px;height:16px;background:#d4d0c8"></div>
<div class="t " style="left:886px;top:73px;height:14px;line-height:14px;"><span class="k" style="width:105.5px"><i style="transform:scaleX(0.676)">オブジェクトインスペクタ</i></span></div>
<svg style="left:1339px;top:74px" width="9" height="9" viewBox="0 0 9 9"><path d="M3.5 0.5h5v4h-2M3.5 1.5h5M0.5 3.5h5v5h-5zM0.5 4.5h5" fill="none" stroke="#000" stroke-width="1"/></svg>
<svg style="left:1354px;top:74px" width="9" height="9" viewBox="0 0 9 9"><path d="M0.7 0.7l7.6 7.6M8.3 0.7l-7.6 7.6" stroke="#000" stroke-width="1.3" fill="none"/></svg>
<div class="sunken white" style="left:885px;top:90px;width:480px;height:189px;"></div>
<div class="btn" style="left:887px;top:92px;width:135px;height:19px;"></div>
<div class="btn" style="left:1022px;top:92px;width:326px;height:19px;"></div>
<div class="t " style="left:890px;top:95px;height:14px;line-height:14px;"><span class="k" style="width:51.5px"><i style="transform:scaleX(0.66)">オブジェクト</i></span></div>
<div class="t " style="left:1026px;top:95px;height:14px;line-height:14px;"><span class="k" style="width:27px"><i style="transform:scaleX(0.692)">クラス</i></span></div>
<div class="dither" style="left:1348px;top:92px;width:16px;height:185px;"></div>
<div class="raised" style="left:1348px;top:92px;width:16px;height:16px;"></div>
<svg style="left:1352px;top:98px" width="7" height="4" viewBox="0 0 7 4"><polygon points="0,4 3.5,0 7,4" fill="#000"/></svg>
<div class="raised" style="left:1348px;top:261px;width:16px;height:16px;"></div>
<svg style="left:1352px;top:267px" width="7" height="4" viewBox="0 0 7 4"><polygon points="0,0 7,0 3.5,4" fill="#000"/></svg>
<div class="raised" style="left:1348px;top:108px;width:16px;height:98px;"></div>
<div class="" style="left:887px;top:160px;width:461px;height:18px;background:#f6f6f6"></div>
<div class="" style="left:887px;top:196px;width:461px;height:18px;background:#f6f6f6"></div>
<div class="" style="left:887px;top:232px;width:461px;height:18px;background:#f6f6f6"></div>
<div class="" style="left:887px;top:268px;width:461px;height:9px;background:#f6f6f6"></div>
<div class="" style="left:927px;top:124px;width:421px;height:18px;background:#0a246a"></div>
<div class="" style="left:949px;top:124px;width:74px;height:18px;border:1px dotted #fff"></div>
<div class="" style="left:917px;top:124px;width:1px;height:5px;background-image:linear-gradient(#808080 50%,transparent 0);background-size:1px 2px;"></div>
<div class="" style="left:917px;top:138px;width:1px;height:139px;background-image:linear-gradient(#808080 50%,transparent 0);background-size:1px 2px;"></div>
<div class="" style="left:937px;top:142px;width:1px;height:5px;background-image:linear-gradient(#808080 50%,transparent 0);background-size:1px 2px;"></div>
<div class="" style="left:957px;top:160px;width:1px;height:5px;background-image:linear-gradient(#808080 50%,transparent 0);background-size:1px 2px;"></div>
<div class="" style="left:977px;top:178px;width:1px;height:64px;background-image:linear-gradient(#808080 50%,transparent 0);background-size:1px 2px;"></div>
<div class="" style="left:957px;top:174px;width:1px;height:80px;background-image:linear-gradient(#808080 50%,transparent 0);background-size:1px 2px;"></div>
<div class="" style="left:977px;top:268px;width:1px;height:9px;background-image:linear-gradient(#808080 50%,transparent 0);background-size:1px 2px;"></div>
<div class="" style="left:902px;top:118px;width:6px;height:1px;background-image:linear-gradient(90deg,#808080 50%,transparent 0);background-size:2px 1px;"></div>
<div class="" style="left:922px;top:133px;width:6px;height:1px;background-image:linear-gradient(90deg,#808080 50%,transparent 0);background-size:2px 1px;"></div>
<div class="" style="left:942px;top:151px;width:6px;height:1px;background-image:linear-gradient(90deg,#808080 50%,transparent 0);background-size:2px 1px;"></div>
<div class="" style="left:962px;top:169px;width:6px;height:1px;background-image:linear-gradient(90deg,#808080 50%,transparent 0);background-size:2px 1px;"></div>
<div class="" style="left:962px;top:259px;width:6px;height:1px;background-image:linear-gradient(90deg,#808080 50%,transparent 0);background-size:2px 1px;"></div>
<div class="" style="left:978px;top:187px;width:8px;height:1px;background-image:linear-gradient(90deg,#808080 50%,transparent 0);background-size:2px 1px;"></div>
<div class="" style="left:978px;top:205px;width:8px;height:1px;background-image:linear-gradient(90deg,#808080 50%,transparent 0);background-size:2px 1px;"></div>
<div class="" style="left:978px;top:223px;width:8px;height:1px;background-image:linear-gradient(90deg,#808080 50%,transparent 0);background-size:2px 1px;"></div>
<div class="" style="left:978px;top:241px;width:8px;height:1px;background-image:linear-gradient(90deg,#808080 50%,transparent 0);background-size:2px 1px;"></div>
<div class="" style="left:978px;top:277px;width:8px;height:1px;background-image:linear-gradient(90deg,#808080 50%,transparent 0);background-size:2px 1px;"></div>
<svg style="left:893px;top:114px" width="9" height="9" viewBox="0 0 9 9"><rect x="0.5" y="0.5" width="8" height="8" fill="#fff" stroke="#808080"/><path d="M2 4.5h5" stroke="#000"/></svg>
<svg style="left:913px;top:129px" width="9" height="9" viewBox="0 0 9 9"><rect x="0.5" y="0.5" width="8" height="8" fill="#fff" stroke="#808080"/><path d="M2 4.5h5" stroke="#000"/></svg>
<svg style="left:933px;top:147px" width="9" height="9" viewBox="0 0 9 9"><rect x="0.5" y="0.5" width="8" height="8" fill="#fff" stroke="#808080"/><path d="M2 4.5h5" stroke="#000"/></svg>
<svg style="left:953px;top:165px" width="9" height="9" viewBox="0 0 9 9"><rect x="0.5" y="0.5" width="8" height="8" fill="#fff" stroke="#808080"/><path d="M2 4.5h5" stroke="#000"/></svg>
<svg style="left:953px;top:255px" width="9" height="9" viewBox="0 0 9 9"><rect x="0.5" y="0.5" width="8" height="8" fill="#fff" stroke="#808080"/><path d="M2 4.5h5" stroke="#000"/></svg>
<div class="t " style="left:910px;top:111px;height:14px;line-height:14px;letter-spacing:-0.75px">MainWindow</div>
<div class="t " style="left:1026px;top:111px;height:14px;line-height:14px;letter-spacing:-0.7px">QMainWindow</div>
<svg style="left:931px;top:126px" width="14" height="14" viewBox="0 0 14 14"><rect x="1.0" y="1.0" width="3.4" height="3.4" fill="#6a86c8"/><rect x="5.5" y="1.0" width="3.4" height="3.4" fill="#6a86c8"/><rect x="10.0" y="1.0" width="3.4" height="3.4" fill="#6a86c8"/><rect x="1.0" y="5.5" width="3.4" height="3.4" fill="#6a86c8"/><rect x="5.5" y="5.5" width="3.4" height="3.4" fill="#6a86c8"/><rect x="10.0" y="5.5" width="3.4" height="3.4" fill="#6a86c8"/><rect x="1.0" y="10.0" width="3.4" height="3.4" fill="#6a86c8"/><rect x="5.5" y="10.0" width="3.4" height="3.4" fill="#6a86c8"/><rect x="10.0" y="10.0" width="3.4" height="3.4" fill="#6a86c8"/></svg>
<div class="t " style="left:951px;top:126px;height:14px;line-height:14px;color:#fff">centralwidget</div>
<svg style="left:1027px;top:126px" width="16" height="14" viewBox="0 0 16 14"><rect x="0.5" y="0.5" width="15" height="13" fill="#8a96b0" stroke="#5a74b8"/><path d="M2 12l9-10M7 12l7-8" stroke="#a8b2c8" stroke-width="2"/></svg>
<div class="t " style="left:1047px;top:126px;height:14px;line-height:14px;color:#fff">QWidget</div>
<svg style="left:951px;top:144px" width="14" height="14" viewBox="0 0 14 14"><g fill="#b8d4f0" stroke="#6a90c0" stroke-width="0.8"><rect x="0.5" y="0.5" width="13" height="3.4" rx="1"/><rect x="0.5" y="5.2" width="13" height="3.4" rx="1"/><rect x="0.5" y="9.9" width="13" height="3.4" rx="1"/></g></svg>
<div class="t " style="left:972px;top:144px;height:14px;line-height:14px;">ver···out</div>
<svg style="left:1027px;top:144px" width="14" height="14" viewBox="0 0 14 14"><g fill="#b8d4f0" stroke="#6a90c0" stroke-width="0.8"><rect x="0.5" y="0.5" width="13" height="3.4" rx="1"/><rect x="0.5" y="5.2" width="13" height="3.4" rx="1"/><rect x="0.5" y="9.9" width="13" height="3.4" rx="1"/></g></svg>
<div class="t " style="left:1047px;top:144px;height:14px;line-height:14px;">QVBoxLayout</div>
<svg style="left:971px;top:162px" width="14" height="14" viewBox="0 0 14 14"><g fill="#b8d4f0" stroke="#6a90c0" stroke-width="0.8"><rect x="0.5" y="0.5" width="3.4" height="13" rx="1"/><rect x="5.2" y="0.5" width="3.4" height="13" rx="1"/><rect x="9.9" y="0.5" width="3.4" height="13" rx="1"/></g></svg>
<div class="t " style="left:991px;top:162px;height:14px;line-height:14px;">h···t</div>
<svg style="left:1027px;top:162px" width="14" height="14" viewBox="0 0 14 14"><g fill="#b8d4f0" stroke="#6a90c0" stroke-width="0.8"><rect x="0.5" y="0.5" width="3.4" height="13" rx="1"/><rect x="5.2" y="0.5" width="3.4" height="13" rx="1"/><rect x="9.9" y="0.5" width="3.4" height="13" rx="1"/></g></svg>
<div class="t " style="left:1047px;top:162px;height:14px;line-height:14px;">QHBoxLayout</div>
<div class="t " style="left:989px;top:180px;height:14px;line-height:14px;">p···n</div>
<svg style="left:1027px;top:180px" width="14" height="14" viewBox="0 0 14 14"><rect x="0.5" y="0.5" width="13" height="13" rx="1.5" fill="#dcdcdc" stroke="#909090"/><text x="7" y="9.5" font-family="Liberation Sans,sans-serif" font-size="5.5" font-weight="bold" fill="#555" text-anchor="middle">OK</text></svg>
<div class="t " style="left:1047px;top:180px;height:14px;line-height:14px;">QPushButton</div>
<div class="t " style="left:989px;top:198px;height:14px;line-height:14px;">p···2</div>
<svg style="left:1027px;top:198px" width="14" height="14" viewBox="0 0 14 14"><rect x="0.5" y="0.5" width="13" height="13" rx="1.5" fill="#dcdcdc" stroke="#909090"/><text x="7" y="9.5" font-family="Liberation Sans,sans-serif" font-size="5.5" font-weight="bold" fill="#555" text-anchor="middle">OK</text></svg>
<div class="t " style="left:1047px;top:198px;height:14px;line-height:14px;">QPushButton</div>
<div class="t " style="left:989px;top:216px;height:14px;line-height:14px;">p···3</div>
<svg style="left:1027px;top:216px" width="14" height="14" viewBox="0 0 14 14"><rect x="0.5" y="0.5" width="13" height="13" rx="1.5" fill="#dcdcdc" stroke="#909090"/><text x="7" y="9.5" font-family="Liberation Sans,sans-serif" font-size="5.5" font-weight="bold" fill="#555" text-anchor="middle">OK</text></svg>
<div class="t " style="left:1047px;top:216px;height:14px;line-height:14px;">QPushButton</div>
<div class="t " style="left:989px;top:234px;height:14px;line-height:14px;">p···4</div>
<svg style="left:1027px;top:234px" width="14" height="14" viewBox="0 0 14 14"><rect x="0.5" y="0.5" width="13" height="13" rx="1.5" fill="#dcdcdc" stroke="#909090"/><text x="7" y="9.5" font-family="Liberation Sans,sans-serif" font-size="5.5" font-weight="bold" fill="#555" text-anchor="middle">OK</text></svg>
<div class="t " style="left:1047px;top:234px;height:14px;line-height:14px;">QPushButton</div>
<svg style="left:971px;top:252px" width="14" height="14" viewBox="0 0 14 14"><g fill="#b8d4f0" stroke="#6a90c0" stroke-width="0.8"><rect x="0.5" y="0.5" width="3.4" height="13" rx="1"/><rect x="5.2" y="0.5" width="3.4" height="13" rx="1"/><rect x="9.9" y="0.5" width="3.4" height="13" rx="1"/></g></svg>
<div class="t " style="left:991px;top:252px;height:14px;line-height:14px;">h···2</div>
<svg style="left:1027px;top:252px" width="14" height="14" viewBox="0 0 14 14"><g fill="#b8d4f0" stroke="#6a90c0" stroke-width="0.8"><rect x="0.5" y="0.5" width="3.4" height="13" rx="1"/><rect x="5.2" y="0.5" width="3.4" height="13" rx="1"/><rect x="9.9" y="0.5" width="3.4" height="13" rx="1"/></g></svg>
<div class="t " style="left:1047px;top:252px;height:14px;line-height:14px;">QHBoxLayout</div>
<div style="left:887px;top:268px;width:461px;height:9px;overflow:hidden">
<div class="t " style="left:102px;top:2px;height:14px;line-height:14px;">label</div>
<svg style="left:140px;top:0px" width="16" height="14" viewBox="0 0 16 14"><path d="M4 3l5-2 7 8-4 5-8-7z" fill="#fff" stroke="#c06a10" stroke-width="1.6"/><path d="M1 2q3-2 4 3" stroke="#444" fill="none"/></svg>
<div class="t " style="left:160px;top:2px;height:14px;line-height:14px;">QLabel</div>
</div>
<div class="t " style="left:886px;top:288px;height:14px;line-height:14px;"><span class="k" style="width:76px"><i style="transform:scaleX(0.65)">プロパティエディタ</i></span></div>
<svg style="left:1339px;top:289px" width="9" height="9" viewBox="0 0 9 9"><path d="M3.5 0.5h5v4h-2M3.5 1.5h5M0.5 3.5h5v5h-5zM0.5 4.5h5" fill="none" stroke="#000" stroke-width="1"/></svg>
<svg style="left:1354px;top:289px" width="9" height="9" viewBox="0 0 9 9"><path d="M0.7 0.7l7.6 7.6M8.3 0.7l-7.6 7.6" stroke="#000" stroke-width="1.3" fill="none"/></svg>
<div class="sunken white" style="left:887px;top:312px;width:384px;height:20px;"></div>
<div class="t gray" style="left:891px;top:315px;height:14px;line-height:14px;"><span class="k" style="width:33.5px"><i style="transform:scaleX(0.644)">フィルタ</i></span></div>
<svg style="left:1274px;top:310px" width="24" height="24" viewBox="0 0 24 24"><defs><linearGradient id="gp" x1="0" y1="0" x2="1" y2="1"><stop offset="0" stop-color="#a4f58c"/><stop offset="0.45" stop-color="#3fd828"/><stop offset="1" stop-color="#1a9a0c"/></linearGradient></defs><path d="M10 1.500h4.500q1 0 1 1v6.500h6.500q1 0 1 1v4.500q0 1-1 1h-6.500v6.500q0 1-1 1h-4.500q-1 0-1-1v-6.500h-6.500q-1 0-1-1v-4.500q0-1 1-1h6.500v-6.500q0-1 1-1z" fill="url(#gp)" stroke="#2aa818" stroke-width="0.800"/><path d="M19 20h6l-3 3z" fill="#000"/></svg>
<svg style="left:1305px;top:310px" width="24" height="24" viewBox="0 0 24 24"><rect x="1.5" y="9.5" width="20" height="5" rx="1" fill="#d0cdc6" stroke="#b0aca4"/></svg>
<svg style="left:1335px;top:310px" width="26" height="24" viewBox="0 0 26 24"><path d="M2.500 21.500l13-13.500" stroke="#8c8c8c" stroke-width="3.600" stroke-linecap="round"/><path d="M2.500 21.500l13-13.500" stroke="#dcdcdc" stroke-width="1.600" stroke-linecap="round"/><path d="M14 9.500q-1.500-3.500 1.500-6 2.500-1.800 5-0.500l-3 3 0.800 2.200 2.200 0.800 3-3q1 3-1 5.200-2.500 2.300-6 1z" fill="#cfcfcf" stroke="#8a8a8a" stroke-width="0.900"/><path d="M19 20h6l-3 3z" fill="#000"/></svg>
<div class="" style="left:885px;top:339px;width:480px;height:17px;box-shadow:inset 1px 1px #808080,inset -1px -1px #fff;"></div>
<div class="t " style="left:887px;top:340px;height:14px;line-height:14px;">centralwidget : QWidget</div>
<div class="sunken white" style="left:885px;top:357px;width:480px;height:184px;"></div>
<div class="btn" style="left:887px;top:359px;width:216px;height:19px;"></div>
<div class="btn" style="left:1103px;top:359px;width:245px;height:19px;"></div>
<div class="t " style="left:890px;top:362px;height:14px;line-height:14px;"><span class="k" style="width:42.5px"><i style="transform:scaleX(0.654)">プロパティ</i></span></div>
<div class="t " style="left:1107px;top:362px;height:14px;line-height:14px;">値</div>
<div class="dither" style="left:1348px;top:359px;width:16px;height:180px;"></div>
<div class="raised" style="left:1348px;top:359px;width:16px;height:16px;"></div>
<svg style="left:1352px;top:365px" width="7" height="4" viewBox="0 0 7 4"><polygon points="0,4 3.5,0 7,4" fill="#000"/></svg>
<div class="raised" style="left:1348px;top:523px;width:16px;height:16px;"></div>
<svg style="left:1352px;top:529px" width="7" height="4" viewBox="0 0 7 4"><polygon points="0,0 7,0 3.5,4" fill="#000"/></svg>
<div class="raised" style="left:1348px;top:375px;width:16px;height:50px;"></div>
<div class="" style="left:887px;top:378px;width:461px;height:17px;background:#808080;"></div>
<div class="t b" style="left:910px;top:380px;height:14px;line-height:14px;color:#fff">QObject</div>
<div class="" style="left:896px;top:386px;width:5px;height:1px;background:#fff"></div>
<div class="" style="left:887px;top:395px;width:461px;height:17px;background:#fff2de;border-bottom:1px solid #c8c8c8;"></div>
<div class="" style="left:1103px;top:395px;width:1px;height:17px;background:#c8c8c8"></div>
<div class="t b" style="left:910px;top:397px;height:14px;line-height:14px;">objectName</div>
<div class="t " style="left:1107px;top:397px;height:14px;line-height:14px;">centralwidget</div>
<div class="" style="left:897px;top:404px;width:9px;height:1px;background-image:linear-gradient(90deg,#808080 50%,transparent 0);background-size:2px 1px;"></div>
<div class="" style="left:887px;top:412px;width:461px;height:17px;background:#808080;"></div>
<div class="t b" style="left:910px;top:414px;height:14px;line-height:14px;color:#fff">QWidget</div>
<div class="" style="left:896px;top:420px;width:5px;height:1px;background:#fff"></div>
<div class="" style="left:887px;top:429px;width:461px;height:18px;background:#ffffde;border-bottom:1px solid #c8c8c8;"></div>
<div class="" style="left:1103px;top:429px;width:1px;height:18px;background:#c8c8c8"></div>
<div class="t " style="left:910px;top:431px;height:14px;line-height:14px;">enabled</div>
<div class="" style="left:897px;top:438px;width:9px;height:1px;background-image:linear-gradient(90deg,#808080 50%,transparent 0);background-size:2px 1px;"></div>
<div class="" style="left:887px;top:447px;width:461px;height:16px;background:#ffffbf;border-bottom:1px solid #c8c8c8;"></div>
<div class="" style="left:1103px;top:447px;width:1px;height:16px;background:#c8c8c8"></div>
<div class="t b" style="left:910px;top:448px;height:14px;line-height:14px;">geometry</div>
<div class="t num2" style="left:1107px;top:448px;height:14px;line-height:14px;">[(0, 17), 800 <span class="x">×</span> 565]</div>
<svg style="left:893px;top:451px" width="9" height="9" viewBox="0 0 9 9"><rect x="0.5" y="0.5" width="8" height="8" fill="#fff" stroke="#808080"/><path d="M2 4.5h5" stroke="#000"/><path d="M4.5 2v5" stroke="#000"/></svg>
<div class="" style="left:902px;top:455px;width:4px;height:1px;background-image:linear-gradient(90deg,#808080 50%,transparent 0);background-size:2px 1px;"></div>
<div class="" style="left:887px;top:463px;width:461px;height:16px;background:#ffffde;border-bottom:1px solid #c8c8c8;"></div>
<div class="" style="left:1103px;top:463px;width:1px;height:16px;background:#c8c8c8"></div>
<div class="t " style="left:910px;top:464px;height:14px;line-height:14px;">sizePolicy</div>
<div class="t " style="left:1107px;top:464px;height:14px;line-height:14px;">[Preferred, Preferred, 0, 0]</div>
<svg style="left:893px;top:467px" width="9" height="9" viewBox="0 0 9 9"><rect x="0.5" y="0.5" width="8" height="8" fill="#fff" stroke="#808080"/><path d="M2 4.5h5" stroke="#000"/><path d="M4.5 2v5" stroke="#000"/></svg>
<div class="" style="left:902px;top:471px;width:4px;height:1px;background-image:linear-gradient(90deg,#808080 50%,transparent 0);background-size:2px 1px;"></div>
<div class="" style="left:887px;top:479px;width:461px;height:16px;background:#ffffbf;border-bottom:1px solid #c8c8c8;"></div>
<div class="" style="left:1103px;top:479px;width:1px;height:16px;background:#c8c8c8"></div>
<div class="t " style="left:910px;top:480px;height:14px;line-height:14px;">minimumSize</div>
<div class="t num" style="left:1107px;top:480px;height:14px;line-height:14px;">0 <span class="x">×</span> 0</div>
<svg style="left:893px;top:483px" width="9" height="9" viewBox="0 0 9 9"><rect x="0.5" y="0.5" width="8" height="8" fill="#fff" stroke="#808080"/><path d="M2 4.5h5" stroke="#000"/><path d="M4.5 2v5" stroke="#000"/></svg>
<div class="" style="left:902px;top:487px;width:4px;height:1px;background-image:linear-gradient(90deg,#808080 50%,transparent 0);background-size:2px 1px;"></div>
<div class="" style="left:887px;top:495px;width:461px;height:16px;background:#ffffde;border-bottom:1px solid #c8c8c8;"></div>
<div class="" style="left:1103px;top:495px;width:1px;height:16px;background:#c8c8c8"></div>
<div class="t " style="left:910px;top:496px;height:14px;line-height:14px;">maximumSize</div>
<div class="t num" style="left:1107px;top:496px;height:14px;line-height:14px;">16777215 <span class="x">×</span> 16777215</div>
<svg style="left:893px;top:499px" width="9" height="9" viewBox="0 0 9 9"><rect x="0.5" y="0.5" width="8" height="8" fill="#fff" stroke="#808080"/><path d="M2 4.5h5" stroke="#000"/><path d="M4.5 2v5" stroke="#000"/></svg>
<div class="" style="left:902px;top:503px;width:4px;height:1px;background-image:linear-gradient(90deg,#808080 50%,transparent 0);background-size:2px 1px;"></div>
<div class="" style="left:887px;top:511px;width:461px;height:16px;background:#ffffbf;border-bottom:1px solid #c8c8c8;"></div>
<div class="" style="left:1103px;top:511px;width:1px;height:16px;background:#c8c8c8"></div>
<div class="t " style="left:910px;top:512px;height:14px;line-height:14px;">sizeIncrement</div>
<div class="t num" style="left:1107px;top:512px;height:14px;line-height:14px;">0 <span class="x">×</span> 0</div>
<svg style="left:893px;top:515px" width="9" height="9" viewBox="0 0 9 9"><rect x="0.5" y="0.5" width="8" height="8" fill="#fff" stroke="#808080"/><path d="M2 4.5h5" stroke="#000"/><path d="M4.5 2v5" stroke="#000"/></svg>
<div class="" style="left:902px;top:519px;width:4px;height:1px;background-image:linear-gradient(90deg,#808080 50%,transparent 0);background-size:2px 1px;"></div>
<div class="" style="left:887px;top:527px;width:461px;height:12px;background:#ffffde;border-bottom:1px solid #c8c8c8;"></div>
<div class="" style="left:1103px;top:527px;width:1px;height:12px;background:#c8c8c8"></div>
<div class="t " style="left:910px;top:528px;height:14px;line-height:14px;">baseSize</div>
<div class="t num" style="left:1107px;top:528px;height:14px;line-height:14px;">0 <span class="x">×</span> 0</div>
<svg style="left:893px;top:531px" width="9" height="9" viewBox="0 0 9 9"><rect x="0.5" y="0.5" width="8" height="8" fill="#fff" stroke="#808080"/><path d="M2 4.5h5" stroke="#000"/><path d="M4.5 2v5" stroke="#000"/></svg>
<div class="" style="left:902px;top:535px;width:4px;height:1px;background-image:linear-gradient(90deg,#808080 50%,transparent 0);background-size:2px 1px;"></div>
<div class="" style="left:897px;top:395px;width:1px;height:9px;background-image:linear-gradient(#808080 50%,transparent 0);background-size:1px 2px;"></div>
<div class="" style="left:897px;top:429px;width:1px;height:110px;background-image:linear-gradient(#808080 50%,transparent 0);background-size:1px 2px;"></div>
<div class="sunken white" style="left:1107px;top:432px;width:13px;height:13px;"></div>
<svg style="left:1110px;top:435px" width="7" height="7" viewBox="0 0 7 7"><path d="M0 2l2.500 2.500 4.500-4.500v3l-4.500 4.500-2.500-2.500z" fill="#000"/></svg>
<div class="t " style="left:885px;top:548px;height:14px;line-height:14px;"><span class="k" style="width:72px"><i style="transform:scaleX(0.692)">リソースブラウザ</i></span></div>
<svg style="left:1339px;top:550px" width="9" height="9" viewBox="0 0 9 9"><path d="M3.5 0.5h5v4h-2M3.5 1.5h5M0.5 3.5h5v5h-5zM0.5 4.5h5" fill="none" stroke="#000" stroke-width="1"/></svg>
<svg style="left:1354px;top:550px" width="9" height="9" viewBox="0 0 9 9"><path d="M0.7 0.7l7.6 7.6M8.3 0.7l-7.6 7.6" stroke="#000" stroke-width="1.3" fill="none"/></svg>
<svg style="left:889px;top:570px" width="24" height="24" viewBox="0 0 24 24"><path d="M3.200 19.300l14.300-14.800 2.800 2.700-14.500 14.600z" fill="#f3b62a" stroke="#c88a18" stroke-width="0.700"/><path d="M4.600 20.600l14.300-14.700" stroke="#fbe08a" stroke-width="1"/><path d="M3.200 19.300l2.600 2.500-4.400 1.600z" fill="#f0d8a8"/><path d="M1.400 23.400l1.700-0.600-1.100-1.100z" fill="#333"/><circle cx="20.300" cy="4.300" r="2.500" fill="#d87a2c"/><circle cx="19.800" cy="3.800" r="1.200" fill="#e89a50"/></svg>
<svg style="left:919px;top:571px" width="22" height="22" viewBox="0 0 22 22"><defs><linearGradient id="gr" x1="0" y1="0" x2="0" y2="1"><stop offset="0" stop-color="#a2e2a2"/><stop offset="0.45" stop-color="#2a9c2a"/><stop offset="1" stop-color="#27cf27"/></linearGradient></defs><path d="M17.700 4.300A9.500 9.500 0 1 0 18.800 16.400L14.300 13.300A4 4 0 1 1 14.900 10.500L21 10.500L21 2Z" fill="url(#gr)" stroke="#0d6e0d" stroke-width="0.900" stroke-linejoin="round"/></svg>
<div class="sunken white" style="left:1155px;top:572px;width:209px;height:19px;"></div>
<div class="t gray" style="left:1159px;top:575px;height:14px;line-height:14px;"><span class="k" style="width:33.5px"><i style="transform:scaleX(0.644)">フィルタ</i></span></div>
<div class="sunken white" style="left:885px;top:598px;width:239px;height:86px;"></div>
<div class="sunken white" style="left:1128px;top:598px;width:238px;height:86px;"></div>
<div class="" style="left:898px;top:600px;width:1px;height:6px;background-image:linear-gradient(#808080 50%,transparent 0);background-size:1px 2px;"></div>
<div class="" style="left:898px;top:606px;width:9px;height:1px;background-image:linear-gradient(90deg,#808080 50%,transparent 0);background-size:2px 1px;"></div>
<div class="t " style="left:909px;top:599px;height:14px;line-height:14px;">&lt;resource root&gt;</div>
<div class="" style="left:885px;top:685px;width:481px;height:1px;background:#404040"></div>
<div style="left:887px;top:686px;width:134px;height:16px;background:#d4d0c8;border-left:1px solid #fff;border-right:1px solid #404040;border-bottom:1px solid #404040;border-radius:0 0 3px 3px;box-shadow:inset -1px -1px #808080;"></div>
<div class="t " style="left:896px;top:686px;height:14px;line-height:14px;"><span class="k" style="width:36px"><i style="transform:scaleX(0.692)">シグナル</i></span><span style="padding:0 2px">/</span><span class="k" style="width:67px"><i style="transform:scaleX(0.644)">スロットエディタ</i></span></div>
<div style="left:1022px;top:686px;width:99px;height:16px;background:#d4d0c8;border-left:1px solid #fff;border-right:1px solid #404040;border-bottom:1px solid #404040;border-radius:0 0 3px 3px;box-shadow:inset -1px -1px #808080;"></div>
<div class="t " style="left:1031px;top:686px;height:14px;line-height:14px;"><span class="k" style="width:76px"><i style="transform:scaleX(0.65)">アクションエディタ</i></span></div>
<div style="left:1121px;top:684px;width:95px;height:20px;background:#d4d0c8;border-left:1px solid #fff;border-right:1px solid #404040;border-bottom:1px solid #404040;border-radius:0 0 3px 3px;box-shadow:inset -1px -1px #808080;"></div>
<div class="t " style="left:1132px;top:687px;height:14px;line-height:14px;"><span class="k" style="width:72px"><i style="transform:scaleX(0.692)">リソースブラウザ</i></span></div>
<div class="hl" style="left:0px;top:723px;width:1366px;height:1px;"></div>
</body>
</html>
